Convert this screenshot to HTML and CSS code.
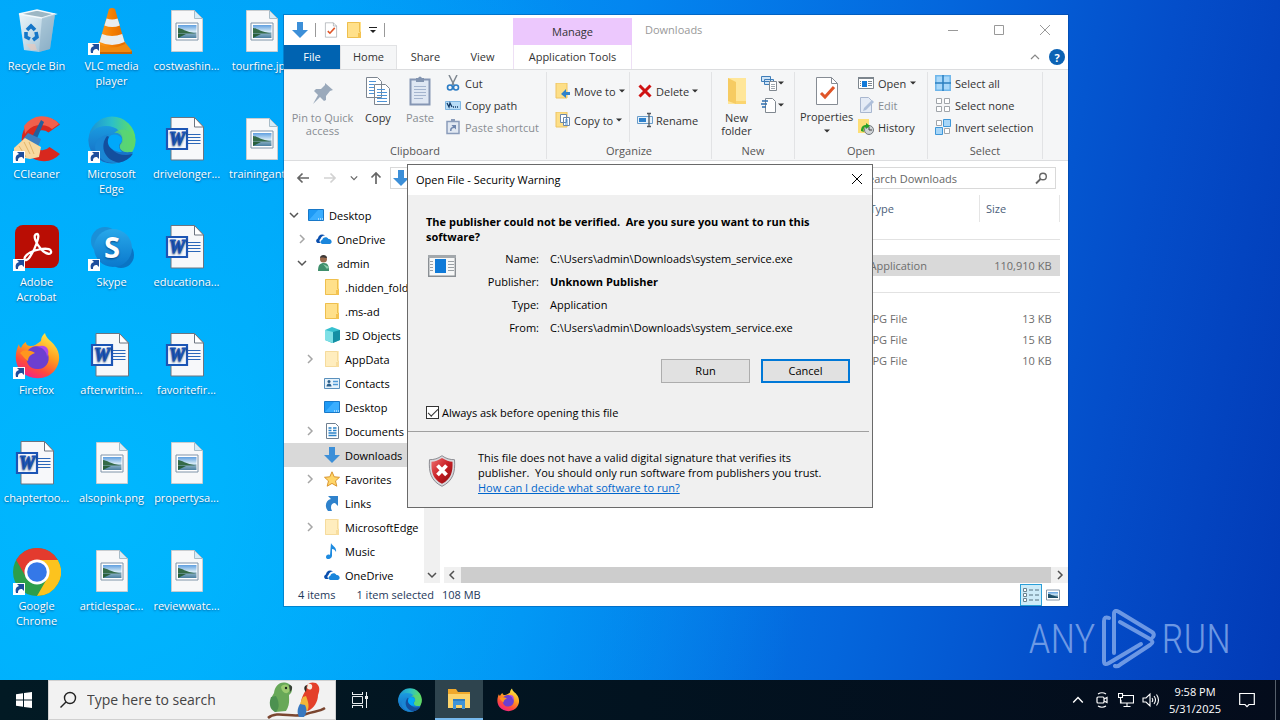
FILE: index.html
```html
<!DOCTYPE html>
<html lang="en">
<head>
<meta charset="utf-8">
<meta name="viewport" content="width=device-width, initial-scale=1">
<title>Downloads</title>
<link rel="stylesheet" href="styles.css">
</head>
<body>
<svg class="sprite" aria-hidden="true">
  <defs>
    <linearGradient id="g-edge1" x1="0" y1="0" x2="1" y2="0"><stop offset="0" stop-color="#1b8fd6"/><stop offset=".5" stop-color="#2cc0c8"/><stop offset="1" stop-color="#62e05c"/></linearGradient>
    <linearGradient id="g-edge2" x1="0" y1="0" x2="0" y2="1"><stop offset="0" stop-color="#1a9be0"/><stop offset="1" stop-color="#1667c0"/></linearGradient>
    <linearGradient id="g-skype" x1="0" y1="0" x2="0" y2="1"><stop offset="0" stop-color="#28a8ea"/><stop offset="1" stop-color="#0a78cc"/></linearGradient>
    <linearGradient id="g-fox" x1=".8" y1="0" x2=".3" y2="1"><stop offset="0" stop-color="#fff04a"/><stop offset=".45" stop-color="#ff9a1f"/><stop offset=".75" stop-color="#ff4a3c"/><stop offset="1" stop-color="#f0208c"/></linearGradient>
    <linearGradient id="g-cone" x1="0" y1="0" x2="1" y2="0"><stop offset="0" stop-color="#ff9a1e"/><stop offset=".5" stop-color="#f57f00"/><stop offset="1" stop-color="#e06a00"/></linearGradient>
    <linearGradient id="g-bin" x1="0" y1="0" x2="1" y2="1"><stop offset="0" stop-color="#eef6fa"/><stop offset=".5" stop-color="#c4dbe8"/><stop offset="1" stop-color="#8fb4cc"/></linearGradient>
    <linearGradient id="g-photo" x1="0" y1="0" x2="0" y2="1"><stop offset="0" stop-color="#5f9fe0"/><stop offset=".5" stop-color="#d3e8f4"/><stop offset=".6" stop-color="#8fb4c8"/><stop offset="1" stop-color="#4c80a0"/></linearGradient>
    <linearGradient id="g-shield" x1="0" y1="0" x2="1" y2="1"><stop offset="0" stop-color="#f07070"/><stop offset=".5" stop-color="#c81e24"/><stop offset="1" stop-color="#8c0c10"/></linearGradient>

    <symbol id="shortcut" viewBox="0 0 48 48"><path d="M0 35h12v12H0z" fill="#fff"/><path d="M3 45c-1-4 0-6 3-7l-2-2h7v7l-2-2c-3 0-4 1-4 4z" fill="#1f4e9c"/></symbol>

    <symbol id="bin" viewBox="0 0 48 48"><path d="M6 6l18-4 18 4-5 35-11 3-15-2z" fill="url(#g-bin)"/><path d="M6 6l18-4 18 4-13 4z" fill="#9db7c4" stroke="#f3f9fc" stroke-width="1.4"/><path d="M29 10l13-4-5 35-11 3z" fill="#7ea5bd" opacity=".45"/><g fill="none" stroke="#1576c8" stroke-width="3.6"><path d="M14 22l4-4 4 4M23 24l1 5-4 3M17 31l-4-2 0-5"/></g><path d="M13 36l5 6 6 0-2-6z" fill="#f0c8b8" opacity=".6"/></symbol>

    <symbol id="vlc" viewBox="0 0 48 48"><path d="M12 33h24l8 10c0 2-1 3-2 3H6c-2 0-3-1-2-3z" fill="#f08a10"/><path d="M8 44h34l2-1v3H5z" fill="#c86400"/><path d="M21 1q3-2 6 0l10 35q-13 7-26 0z" fill="url(#g-cone)"/><path d="M18.600 10.500q5.500 2 11 0l2.200 7q-7.500 3-15.400 0zM14 26q10 4 20.200 0l2.400 8q-12.500 6-25 0z" fill="#e9edef"/></symbol>

    <symbol id="photo" viewBox="0 0 48 48"><path d="M8.500 2.500h23l8 8v33h-31z" fill="#f7f8f9" stroke="#c9cdd0"/><path d="M31.500 2.500v8h8z" fill="#d5ecf8" stroke="#a8bcc8"/><path d="M13 15h22v17H13z" fill="#fff" stroke="#7e93a8"/><path d="M15 17h18.500v13H15z" fill="url(#g-photo)"/><path d="M15 20c4 0 7 4 18.500 5.500H15z" fill="#356b48"/><path d="M15 26h8l-8 4z" fill="#28603c"/></symbol>

    <symbol id="word" viewBox="0 0 48 48"><path d="M8 1.500h23.500l9 9.500V44H8z" fill="#f7f8fa" stroke="#6c7480"/><path d="M31.500 1.500V11h9z" fill="#fff" stroke="#6c7480"/><path d="M25 18.500h12.500M25 21.500h12.500M25 24.500h12.500M25 27.500h12.500" stroke="#2b67b8" stroke-width="1.200"/><path d="M4 13h20v20H4z" fill="#f4f8fd" stroke="#1c55b5" stroke-width="2.200"/><text x="14" y="29" text-anchor="middle" font-family="Liberation Serif, serif" font-size="18" font-weight="bold" font-style="italic" fill="#1c55b5" stroke="#1c55b5" stroke-width="1">W</text></symbol>

    <symbol id="ccleaner" viewBox="0 0 48 48"><path d="M47 8.500A22 22 0 1 0 47 38l-10.500-7a10 10 0 1 1-1-14.500z" fill="#d8281e"/><path d="M11 10A22 22 0 0 1 46 8l-7 5A18 18 0 0 0 12 18z" fill="#f2604c"/><path d="M28 4l3 2-9 21-5-2z" fill="#245f9c"/><path d="M15 17l13 6-3 8-15-8z" fill="#3d7fc0"/><path d="M1 32l11-10 16 9-2 10-9 2-16-3z" fill="#f8d9a0"/><path d="M11 26l6 12M16 26l5 12M6 30l7 11" stroke="#e2b468" fill="none"/></symbol>

    <symbol id="edge" viewBox="0 0 48 48"><circle cx="24" cy="24" r="23.500" fill="url(#g-edge1)"/><path d="M.5 24C1 15 9 10 18 10c11 0 17 7 17 14 0 4-3 4-3 7 0 3 4 6 9 5l4 0C40 44 33 47.500 24 47.500A23.500 23.500 0 0 1 .5 24z" fill="url(#g-edge2)"/><path d="M17 23c-5 9 0 22 15 23-14 4-25-5-25-15 0-6 5-11 14-13-2 1-3 3-4 5z" fill="#1a86d4"/><path d="M19 20c-8 10-2 25 12 26.500 6-1 11-4 14-9-13 5-23-3-23-11 0-2 0-4 1-5z" fill="#134f9e"/><path d="M26 17c5-1 9 3 8 8-1 3-3 4-2 7 2 5 10 5 14 0a23 23 0 0 0 1.500-9C43 14 34 10 26 17z" fill="#5ed66c" opacity=".75"/><path d="M21 21c3-4 11-3 13 2 0 4-3 4-3 7 0 2 1 4 3 6-10 0-17-7-13-15z" fill="#00a8fb"/></symbol>

    <symbol id="acrobat" viewBox="0 0 48 48"><rect x="2" y="1" width="44" height="43" rx="8" fill="#b90d04"/><path d="M24 10c-5 0-1 10 4 15 5 6 11 6 10 2-1-5-22-1-26 6-2 5 3 4 6-2 4-6 10-21 6-21z" fill="none" stroke="#fff" stroke-width="2.300"/></symbol>

    <symbol id="skype" viewBox="0 0 48 48"><circle cx="17" cy="17" r="14" fill="#1a90d8"/><circle cx="33" cy="31" r="13" fill="#0a74c4"/><circle cx="25" cy="24" r="19" fill="url(#g-skype)"/><text x="24" y="34" text-anchor="middle" font-family="Open Sans, sans-serif" font-size="29" font-weight="bold" fill="#fff">S</text></symbol>

    <symbol id="firefox" viewBox="0 0 48 48"><path d="M28 9c0-4 2-6 4-8 1 6 7 8 10 13 5 6 6 16 0 24-8 11-26 11-35 0-6-8-5-18-1-26 0 2 1 3 2 4 1-3 3-5 5-6 0 3 2 4 5 4 3 0 6-2 10-5z" fill="url(#g-fox)"/><path d="M14 20c4-8 17-8 21 2 3 9-4 16-11 15-7 0-12-6-10-14z" fill="#6c3fd0"/><path d="M7 21c4-4 10-3 15 0-3 1-7 3-7 8-4-3-5-5-8-8z" fill="#ff961e"/><path d="M24 15c6 0 10 5 10 10 4-7-1-14-10-10z" fill="#b04ae8"/></symbol>

    <symbol id="chrome" viewBox="0 0 48 48"><circle cx="24" cy="24" r="24" fill="#2c9e4b"/><path d="M3.200 12a24 24 0 0 1 41.600 0H24a12 12 0 0 0-10.500 18z" fill="#e33b2e"/><path d="M24 12h20.800A24 24 0 0 1 24 48l10.400-18A12 12 0 0 0 24 12z" fill="#fcc31e"/><circle cx="24" cy="24" r="12.500" fill="#fff"/><circle cx="24" cy="24" r="9.800" fill="#3478e8"/></symbol>

    <symbol id="down" viewBox="0 0 16 16"><path d="M5 0h6v8h5l-8 8-8-8h5z" fill="#3c8fd8"/></symbol>
    <symbol id="check-doc" viewBox="0 0 24 30"><path d="M1.500 1.500h15l6 6v21h-21z" fill="#fff" stroke="#868c94"/><path d="M16.500 1.500v6h6" fill="none" stroke="#868c94"/><path d="M6 17l4 4 9-10" fill="none" stroke="#e05528" stroke-width="3"/></symbol>
    <symbol id="folder" viewBox="0 0 16 16"><path d="M1 0h14v16H1z" fill="#ffe08a"/><path d="M1.500.5h12V10h1v5.500h-13z" fill="none" stroke="#eebf4e"/><path d="M12 11h3v5h-3z" fill="#f4c24f"/></symbol>
    <symbol id="folder-big" viewBox="0 0 24 30"><path d="M3 2h18v26H3z" fill="#ffe699"/><path d="M3 2l8 4v22l-8-3z" fill="#f6cb62"/><path d="M11 25h10v3H11z" fill="#fbd570"/></symbol>
    <symbol id="pin" viewBox="0 0 24 24"><path d="M14 2l8 7-3 1-4 5 0 4-2 1-4-4-7 7 5-9-4-4 2-2 5 0 4-4z" fill="#9aa9bb"/></symbol>
    <symbol id="copy" viewBox="0 0 26 30"><g fill="#fff" stroke="#7c8590"><path d="M1.500 1.500h11l4 4v16h-15zM9.500 8.500h11l4 4v16h-15z"/></g><g stroke="#4e93d6" fill="none"><path d="M4 5.500h7M4 8.500h5M4 11.500h5M4 14.500h5M4 17.500h5M12 13.500h8M12 16.500h10M12 19.500h10M12 22.500h10M12 25.500h10"/></g></symbol>
    <symbol id="paste" viewBox="0 0 24 30"><path d="M2.500 3.500h19v25h-19z" fill="#dfe7f3" stroke="#8596b4" stroke-width="2"/><path d="M8 2h2q2-3 4 0h2v4H8z" fill="#8294b0"/><path d="M6 10.500h12M6 13.500h12M6 16.500h12M6 19.500h12M6 22.500h9" stroke="#a4b4ce"/></symbol>
    <symbol id="cut" viewBox="0 0 16 16"><path d="M4 0l5 10M12 0L7 10" stroke="#7e8790" stroke-width="1.500"/><circle cx="5" cy="12.500" r="2.500" fill="none" stroke="#2b7cc4" stroke-width="1.600"/><circle cx="11" cy="12.500" r="2.500" fill="none" stroke="#2b7cc4" stroke-width="1.600"/></symbol>
    <symbol id="path" viewBox="0 0 16 16"><path d="M.5 4.500h15v8H.5z" fill="#b8dcf6" stroke="#7fb6e2"/><path d="M2 6l2 4 1-4 2 4M8 10h1M10 10h1M12 10h1" stroke="#123a66" stroke-width="1.300" fill="none"/></symbol>
    <symbol id="paste-link" viewBox="0 0 16 16"><path d="M2 2.500h12v12H2z" fill="#e1e8f2" stroke="#8a9cba" stroke-width="1.500"/><path d="M6 0h4v3H6z" fill="#8a9cba"/><path d="M5 12c0-3 1-4 3-4L6.500 6H11v4.500L9.500 9C7 9 6.500 10 6.500 12z" fill="#6f86ad"/></symbol>
    <symbol id="moveto" viewBox="0 0 16 16"><path d="M1 0h11v15H1z" fill="#fddf88" stroke="#eec463"/><path d="M15 9h-4V6l-5 5 5 4v-3h4z" fill="#2f82cc"/></symbol>
    <symbol id="copyto" viewBox="0 0 16 16"><path d="M1 0h11v15H1z" fill="#fddf88" stroke="#eec463"/><path d="M5.500 2.500h6v8h-6zM8.500 5.500h6v8h-6z" fill="#fff" stroke="#6b87aa"/><path d="M10 8h3M10 10h3M10 12h3" stroke="#4e93d6"/></symbol>
    <symbol id="delete" viewBox="0 0 16 16"><path d="M2.500 2.500l11 11M13.500 2.500l-11 11" stroke="#cf1212" stroke-width="3"/></symbol>
    <symbol id="rename" viewBox="0 0 16 16"><path d="M.5 4.500h15v7H.5z" fill="#e8f3fc" stroke="#6a9cc8"/><path d="M2 6h7v4H2z" fill="#2f82cc"/><path d="M10 1.500h4M10 14.500h4M12 2v12" stroke="#50565c" stroke-width="1.300"/></symbol>
    <symbol id="newitem" viewBox="0 0 16 16"><path d="M.5 1.500h9v5h-9zM3.500 4.500h9v5h-9z" fill="#cfe4f7" stroke="#3f7db8"/><path d="M8.500 6.500h7v9h-7z" fill="#fff" stroke="#808890"/><path d="M10 9.500h4M10 11.500h4M10 13.500h4" stroke="#a0a8b0"/></symbol>
    <symbol id="easyaccess" viewBox="0 0 16 16"><path d="M4.500 1.500h7l3 3v11h-10z" fill="#fff" stroke="#808890"/><path d="M1 4h6M0 7h6M1 10h4" stroke="#2f6fb0" stroke-width="1.400"/></symbol>
    <symbol id="app" viewBox="0 0 16 16"><path d="M.5 2.500h15v11H.5z" fill="#fff" stroke="#7d868e"/><path d="M0 2h16v2H0z" fill="#7d868e"/><path d="M4 6h5v6H4z" fill="#1279d8"/><path d="M10 6.500h4M10 8.500h4M10 10.500h4M2 6.500h1M2 8.500h1M2 10.500h1" stroke="#7d868e"/></symbol>
    <symbol id="edit" viewBox="0 0 16 16"><path d="M2.500.5h8l3 3v12h-11z" fill="#e4ebf6" stroke="#a9b7cf"/><path d="M14 3l2 2-8 8-3 1 1-3z" fill="#aebfda"/></symbol>
    <symbol id="history" viewBox="0 0 16 16"><path d="M0 0h11v14H0z" fill="#fddf77"/><circle cx="11" cy="11" r="4.500" fill="#cfd3d6" stroke="#73797e"/><path d="M11 8v3h3" stroke="#444" fill="none"/><path d="M3 12c0-4 2-6 5-6V4l4 3-4 3V8c-2 0-3 2-2 5z" fill="#2aa02a"/></symbol>
    <symbol id="sel-all" viewBox="0 0 16 16"><path d="M.8.800h14.400v14.400H.8z" fill="#a9d8fa" stroke="#6db5ea" stroke-width="1.500"/><path d="M8 0v16M0 8h16" stroke="#2b7fc0" stroke-width="1.500"/></symbol>
    <symbol id="sel-none" viewBox="0 0 16 16"><path d="M1.500 1.500h5v5h-5zM9.500 1.500h5v5h-5zM1.500 9.500h5v5h-5zM9.500 9.500h5v5h-5z" fill="#fff" stroke="#a0a5aa"/></symbol>
    <symbol id="sel-inv" viewBox="0 0 16 16"><path d="M1.500 1.500h5v5h-5zM9.500 9.500h5v5h-5z" fill="#fff" stroke="#a0a5aa"/><path d="M8.500.5h7v7h-7zM.5 8.500h7v7h-7z" fill="#a7d6f8" stroke="#3f97d8"/></symbol>
    <symbol id="caret" viewBox="0 0 8 8"><path d="M1 2.500h6l-3 3z" fill="currentColor"/></symbol>
    <symbol id="chev-right" viewBox="0 0 10 10"><path d="M3 1l4 4-4 4" fill="none" stroke="currentColor" stroke-width="1.500"/></symbol>
    <symbol id="chev-down" viewBox="0 0 10 10"><path d="M1 3l4 4 4-4" fill="none" stroke="currentColor" stroke-width="1.500"/></symbol>
    <symbol id="chev-up" viewBox="0 0 10 10"><path d="M1 7l4-4 4 4" fill="none" stroke="currentColor" stroke-width="1.200"/></symbol>
    <symbol id="arrow-left" viewBox="0 0 16 16"><path d="M14 8H3M7.500 3.500L3 8l4.500 4.500" fill="none" stroke="currentColor" stroke-width="1.700"/></symbol>
    <symbol id="close" viewBox="0 0 12 12"><path d="M1 1l10 10M11 1L1 11" fill="none" stroke="currentColor"/></symbol>
    <symbol id="lens" viewBox="0 0 16 16"><circle cx="10" cy="6.500" r="3.300" fill="none" stroke="currentColor" stroke-width="1.400"/><path d="M7.500 9L3 13.500" stroke="currentColor" stroke-width="1.800"/></symbol>
    <symbol id="screen" viewBox="0 0 16 16"><path d="M.5 2.500h15v11H.5z" fill="#1e9af5" stroke="#1878c8"/><path d="M1 13l9-10h5v10z" fill="#3aaeff"/><path d="M10 12h1M12 12h1M14 12h1" stroke="#fff"/></symbol>
    <symbol id="cloud" viewBox="0 0 16 16"><path d="M5 12H1.500C-.5 11-.2 8 2 7.500 2 4 6 2 9 4.500c-3 0-4 2-4.500 3.500C3 9 3 11 5 12z" fill="#0a4fae"/><path d="M6.500 13C4 12.500 4 9.500 6.200 9 6.500 6 11 5 12.500 8c3-.5 4.500 4 1.500 5z" fill="#1a86dc"/></symbol>
    <symbol id="user" viewBox="0 0 16 16"><circle cx="7.500" cy="4" r="3.500" fill="#9a6a4c"/><path d="M4 3c0-4 7-4 7 0-3 0-4-1-7 0z" fill="#3e3a38"/><path d="M2 16c0-6 2-8 6-8s5 3 5 8z" fill="#3f8f6c"/><path d="M7 9l4 5 2-2z" fill="#8fd0b0"/></symbol>
    <symbol id="cube" viewBox="0 0 16 16"><path d="M1 3l7-3 8 3v10l-8 3-7-3z" fill="#36c0cf"/><path d="M1 3l8 2v11l-8-3z" fill="#7fe0e6"/><path d="M9 5l7-2v10l-7 3z" fill="#148fa4"/></symbol>
    <symbol id="contacts" viewBox="0 0 16 16"><path d="M.5 3.500h15v10H.5z" fill="#e6f2fb" stroke="#5a90bc"/><circle cx="5" cy="6.500" r="1.500" fill="#2a5f8c"/><path d="M2.500 11.500c0-4 5-4 5 0z" fill="#2a5f8c"/><path d="M9 6.500h5M9 9.500h5" stroke="#4f9ad6" stroke-width="1.500"/></symbol>
    <symbol id="document" viewBox="0 0 16 16"><path d="M2.500.5h9l3 3v12h-12z" fill="#fff" stroke="#6f7f90"/><path d="M4.500 5h3M4.500 7.500h3M4.500 10h8M4.500 12.500h8M9 5h3.500M9 7.500h3.500" stroke="#2b82c8" stroke-width="1.500"/></symbol>
    <symbol id="star" viewBox="0 0 16 16"><path d="M8 .8l2.200 5 5.300.5-4 3.600 1.300 5.300L8 12.400l-4.800 2.800 1.300-5.300-4-3.600 5.300-.5z" fill="#ffd668" stroke="#d99530"/></symbol>
    <symbol id="link" viewBox="0 0 16 16"><path d="M4 16C0 11 2 5 7 4L4 1h10v10l-3-3c-4 0-5 4-3 8z" fill="#2f82cc"/></symbol>
    <symbol id="note" viewBox="0 0 16 16"><path d="M7 0c1 3 6 4 5 9-1-2-2-3-4-3v7c-1 4-6 4-6 1 0-2 2-3 4-2z" fill="#1e8be0"/></symbol>
    <symbol id="warn-app" viewBox="0 0 28 22"><path d="M.7.700h26.600v20.600H.7z" fill="#f6f7f7" stroke="#8a8f94" stroke-width="1.400"/><path d="M0 0h28v3H0z" fill="#a3a8ac"/><path d="M7 4h11v14H7z" fill="#0f7ad8"/><path d="M2 6.500h3M2 9.500h3M2 12.500h3M2 15.500h3M20 6.500h6M20 9.500h6M20 12.500h6M20 15.500h6" stroke="#9aa0a5"/></symbol>
    <symbol id="shield" viewBox="0 0 28 32"><path d="M14 .7c4 3 8 4 12.500 4C27.500 17 25 26 14 31.300 3 26 .5 17 1.500 4.700 6 4.700 10 3.700 14 .7z" fill="#d8d8dc" stroke="#8c8c92"/><path d="M14 3c4 2.500 7 3.500 10.500 3.700.5 10.500-1.500 17.300-10.500 22C5 24 3 17.200 3.500 6.700 7 6.500 10 5.500 14 3z" fill="url(#g-shield)"/><path d="M9.500 10.500l9 9.500M18.500 10.500l-9 9.500" stroke="#fff" stroke-width="3.800"/></symbol>
    <symbol id="details" viewBox="0 0 16 16"><path d="M.5 1.500h3v3h-3zM.5 6.500h3v3h-3zM.5 11.500h3v3h-3z" fill="#fff" stroke="#69828f"/><path d="M6 3h4M12 3h4M6 8h4M12 8h4M6 13h4M12 13h4" stroke="#55707e"/></symbol>
    <symbol id="thumbs" viewBox="0 0 16 16"><path d="M1.500 3h13v10h-13z" fill="#fff" stroke="#8a98a8"/><path d="M3 5h10v6H3z" fill="url(#g-photo)"/><path d="M3 7c3 0 5 2 10 3v1H3z" fill="#1f4e68"/></symbol>
    <symbol id="parrots" viewBox="0 0 62 38"><path d="M1 37c9-8 26 1 38-4 8-3 13-2 19-6" fill="none" stroke="#7a4630" stroke-width="2.500"/><path d="M22 3c-8-4-14 1-15 9-5 7-4 15 1 19l11-1c4-6 3-11 3-16 4-3 4-9 0-11z" fill="#68a858"/><path d="M4 16c-3 8 0 14 5 15 4-4 3-11 0-16z" fill="#4c9150"/><path d="M14 6c3-4 8-3 9 3-2 5-8 4-9-3z" fill="#9acb70"/><path d="M22 4c4 0 4 4 1 7z" fill="#384038"/><circle cx="19" cy="7" r="1.200" fill="#1c2a1c"/><path d="M49 2c-6-2-10 1-10 7-4 6-6 12-5 18l7 3c6-3 10-9 10-16 2-5 2-9-2-12z" fill="#e4402a"/><path d="M36 16c-3 5-4 10-3 14l7 0c3-4 1-10-1-15z" fill="#f2b63a"/><path d="M33 23c-3 5-3 9-1 13h5c3-4 3-8 1-12z" fill="#3878c0"/><path d="M41 3c3-1 5 1 4 4-1 2-3 2-5 0z" fill="#f6ece0"/><path d="M40 4c-4 1-3 5-1 7z" fill="#2c2622"/></symbol>
    <symbol id="explorer" viewBox="0 0 24 22"><path d="M1 1h8l2 3h12v5H1z" fill="#f0a92c"/><path d="M1 6h22v14H1z" fill="#fcd46c"/><path d="M6 13h12v8h-3v-4H9v4H6z" fill="#3f94d8"/><path d="M6 11h12v2H6z" fill="#2d7cc0"/></symbol>
    <symbol id="win" viewBox="0 0 16 16"><path d="M0 2.200L7 1.200V7.600H0zM8 1L16 0V7.600H8zM0 8.500H7v6.300L0 13.800zM8 8.500h8V16l-8-1.100z" fill="#fff"/></symbol>
    <symbol id="taskview" viewBox="0 0 18 16"><g fill="none" stroke="#e8ecee"><path d="M1 2.500h11M1 13.500h11M1.500 4.500h10v7h-10zM1.500 0v2.500M11.500 0v2.500M1.500 13.500v2.500M11.500 13.500v2.500M15.500 0v16"/></g><path d="M14 4h3v3h-3z" fill="#e8ecee"/></symbol>
    <symbol id="camera" viewBox="0 0 16 16"><g fill="none" stroke="#fff" stroke-width="1.200"><rect x="3" y="5" width="7" height="6" rx="1"/><path d="M10 7l3-1.500v5L10 9M4 2q4-2.500 8 0M4 14q4 2.500 8 0"/></g></symbol>
    <symbol id="network" viewBox="0 0 16 16"><g fill="none" stroke="#fff" stroke-width="1.100"><path d="M5 3.500h10.500v7.500H3V8M9 11v3M5.500 14.500h7M.5 1.500h4v4h-4zM2.500 5.500v6"/></g></symbol>
    <symbol id="volume" viewBox="0 0 18 16"><g fill="none" stroke="#fff" stroke-width="1.100"><path d="M1 6h3l4-4v12l-4-4H1zM10 6q1.500 2 0 4M12 4q3 4 0 8M14.500 2.500q4 5.500 0 11"/></g></symbol>
    <symbol id="notice" viewBox="0 0 16 16"><path d="M.7 1.500h14.600v11H10L8 14.700 6 12.500H.7z" fill="none" stroke="#fff" stroke-width="1.200"/></symbol>
    <symbol id="play" viewBox="0 0 54 62"><g fill="none" stroke="#7fa6ea" stroke-width="4" stroke-linejoin="round" stroke-linecap="round"><path d="M7 9q-5-2-5 3v40q0 5 5 2l32-19"/><path d="M18 13l30 17q5 3 0 6L19 55q-3 3-6 2M12 44V5q0-5 5-2l33 20q3 2 1 5"/></g></symbol>
  </defs>
</svg>

<div class="shell">
  <main class="desktop">
    <ul class="shortcuts">
      <li><svg class="big"><use href="#bin"/></svg><span>Recycle Bin</span></li>
      <li><svg class="big"><use href="#ccleaner"/><use href="#shortcut"/></svg><span>CCleaner</span></li>
      <li><svg class="big"><use href="#acrobat"/><use href="#shortcut"/></svg><span>Adobe<br>Acrobat</span></li>
      <li><svg class="big"><use href="#firefox"/><use href="#shortcut"/></svg><span>Firefox</span></li>
      <li><svg class="big"><use href="#word"/></svg><span>chaptertoo...</span></li>
      <li><svg class="big"><use href="#chrome"/><use href="#shortcut"/></svg><span>Google<br>Chrome</span></li>
      <li><svg class="big"><use href="#vlc"/><use href="#shortcut"/></svg><span>VLC media<br>player</span></li>
      <li><svg class="big"><use href="#edge"/><use href="#shortcut"/></svg><span>Microsoft<br>Edge</span></li>
      <li><svg class="big"><use href="#skype"/><use href="#shortcut"/></svg><span>Skype</span></li>
      <li><svg class="big"><use href="#word"/></svg><span>afterwritin...</span></li>
      <li><svg class="big"><use href="#photo"/></svg><span>alsopink.png</span></li>
      <li><svg class="big"><use href="#photo"/></svg><span>articlespac...</span></li>
      <li><svg class="big"><use href="#photo"/></svg><span>costwashin...</span></li>
      <li><svg class="big"><use href="#word"/></svg><span>drivelonger...</span></li>
      <li><svg class="big"><use href="#word"/></svg><span>educationa...</span></li>
      <li><svg class="big"><use href="#word"/></svg><span>favoritefir...</span></li>
      <li><svg class="big"><use href="#photo"/></svg><span>propertysa...</span></li>
      <li><svg class="big"><use href="#photo"/></svg><span>reviewwatc...</span></li>
      <li><svg class="big"><use href="#photo"/></svg><span>tourfine.jpg</span></li>
      <li><svg class="big"><use href="#photo"/></svg><span>trainingant...</span></li>
    </ul>

    <div class="watermark"><span>ANY</span><svg><use href="#play"/></svg><span>RUN</span></div>

    <section class="window" aria-label="Downloads">
      <header class="titlebar">
        <div class="quick">
          <svg class="ico"><use href="#down"/></svg><i class="bar"></i>
          <svg class="ico"><use href="#check-doc"/></svg>
          <svg class="ico"><use href="#folder"/></svg>
          <svg class="menu-caret" viewBox="0 0 8 8"><path d="M0 1.500h8" stroke="#222"/><path d="M1 4h6L4 7z" fill="#222"/></svg><i class="bar"></i>
        </div>
        <div class="manage">Manage</div>
        <h1>Downloads</h1>
        <div class="controls">
          <button aria-label="Minimize"><svg viewBox="0 0 12 12"><path d="M1 6.500h10" stroke="currentColor"/></svg></button>
          <button aria-label="Maximize"><svg viewBox="0 0 12 12"><path d="M1.500 1.500h9v9h-9z" fill="none" stroke="currentColor"/></svg></button>
          <button aria-label="Close"><svg><use href="#close"/></svg></button>
        </div>
      </header>
      <nav class="tabs">
        <button class="tab file">File</button>
        <button class="tab home">Home</button>
        <button class="tab">Share</button>
        <button class="tab">View</button>
        <button class="tab tools">Application Tools</button>
        <span class="tab-end"><svg class="collapse"><use href="#chev-up"/></svg><button class="help" aria-label="Help">?</button></span>
      </nav>

      <div class="ribbon">
        <section class="group clipboard">
          <div class="commands">
            <button class="large off pin"><svg class="ico24"><use href="#pin"/></svg>Pin to Quick<br>access</button>
            <button class="large"><svg class="ico30"><use href="#copy"/></svg>Copy</button>
            <button class="large off"><svg class="ico30"><use href="#paste"/></svg>Paste</button>
            <div class="stack">
              <button><svg class="ico"><use href="#cut"/></svg>Cut</button>
              <button><svg class="ico"><use href="#path"/></svg>Copy path</button>
              <button class="off"><svg class="ico"><use href="#paste-link"/></svg>Paste shortcut</button>
            </div>
          </div>
          <h2>Clipboard</h2>
        </section>
        <section class="group organize">
          <div class="commands">
            <div class="stack roomy">
              <button><svg class="ico"><use href="#moveto"/></svg>Move to<svg class="caret"><use href="#caret"/></svg></button>
              <button><svg class="ico"><use href="#copyto"/></svg>Copy to<svg class="caret"><use href="#caret"/></svg></button>
            </div>
            <div class="stack roomy ruled">
              <button><svg class="ico"><use href="#delete"/></svg>Delete<svg class="caret"><use href="#caret"/></svg></button>
              <button><svg class="ico"><use href="#rename"/></svg>Rename</button>
            </div>
          </div>
          <h2>Organize</h2>
        </section>
        <section class="group new">
          <div class="commands">
            <button class="large"><svg class="ico30"><use href="#folder-big"/></svg>New<br>folder</button>
            <div class="stack tight">
              <button aria-label="New item"><svg class="ico"><use href="#newitem"/></svg><svg class="caret"><use href="#caret"/></svg></button>
              <button aria-label="Easy access"><svg class="ico"><use href="#easyaccess"/></svg><svg class="caret"><use href="#caret"/></svg></button>
            </div>
          </div>
          <h2>New</h2>
        </section>
        <section class="group open">
          <div class="commands">
            <button class="large props"><svg class="ico30"><use href="#check-doc"/></svg>Properties<svg class="caret"><use href="#caret"/></svg></button>
            <div class="stack">
              <button><svg class="ico"><use href="#app"/></svg>Open<svg class="caret"><use href="#caret"/></svg></button>
              <button class="off"><svg class="ico"><use href="#edit"/></svg>Edit</button>
              <button><svg class="ico"><use href="#history"/></svg>History</button>
            </div>
          </div>
          <h2>Open</h2>
        </section>
        <section class="group select">
          <div class="commands">
            <div class="stack">
              <button><svg class="ico"><use href="#sel-all"/></svg>Select all</button>
              <button><svg class="ico"><use href="#sel-none"/></svg>Select none</button>
              <button><svg class="ico"><use href="#sel-inv"/></svg>Invert selection</button>
            </div>
          </div>
          <h2>Select</h2>
        </section>
      </div>

      <div class="location">
        <button aria-label="Back"><svg class="ico"><use href="#arrow-left"/></svg></button>
        <button class="dim" aria-label="Forward"><svg class="ico flip"><use href="#arrow-left"/></svg></button>
        <button class="narrow" aria-label="Recent"><svg class="caret"><use href="#chev-down"/></svg></button>
        <button class="parent" aria-label="Up"><svg class="ico turn"><use href="#arrow-left"/></svg></button>
        <div class="address"><svg class="ico"><use href="#down"/></svg></div>
        <label class="search"><input type="search" placeholder="Search Downloads" aria-label="Search Downloads"><svg class="ico"><use href="#lens"/></svg></label>
      </div>

      <div class="panes">
        <ul class="tree">
          <li class="l1"><svg class="twist on"><use href="#chev-down"/></svg><svg class="ico"><use href="#screen"/></svg>Desktop</li>
          <li class="l2"><svg class="twist"><use href="#chev-right"/></svg><svg class="ico"><use href="#cloud"/></svg>OneDrive</li>
          <li class="l2"><svg class="twist on"><use href="#chev-down"/></svg><svg class="ico"><use href="#user"/></svg>admin</li>
          <li class="l3"><i class="twist"></i><svg class="ico"><use href="#folder"/></svg>.hidden_folder</li>
          <li class="l3"><i class="twist"></i><svg class="ico"><use href="#folder"/></svg>.ms-ad</li>
          <li class="l3"><i class="twist"></i><svg class="ico"><use href="#cube"/></svg>3D Objects</li>
          <li class="l3"><svg class="twist"><use href="#chev-right"/></svg><svg class="ico faint"><use href="#folder"/></svg>AppData</li>
          <li class="l3"><i class="twist"></i><svg class="ico"><use href="#contacts"/></svg>Contacts</li>
          <li class="l3"><i class="twist"></i><svg class="ico"><use href="#screen"/></svg>Desktop</li>
          <li class="l3"><svg class="twist"><use href="#chev-right"/></svg><svg class="ico"><use href="#document"/></svg>Documents</li>
          <li class="l3 current"><i class="twist"></i><svg class="ico"><use href="#down"/></svg>Downloads</li>
          <li class="l3"><svg class="twist"><use href="#chev-right"/></svg><svg class="ico"><use href="#star"/></svg>Favorites</li>
          <li class="l3"><i class="twist"></i><svg class="ico"><use href="#link"/></svg>Links</li>
          <li class="l3"><svg class="twist"><use href="#chev-right"/></svg><svg class="ico faint"><use href="#folder"/></svg>MicrosoftEdge</li>
          <li class="l3"><i class="twist"></i><svg class="ico"><use href="#note"/></svg>Music</li>
          <li class="l3"><i class="twist"></i><svg class="ico"><use href="#cloud"/></svg>OneDrive</li>
        </ul>
        <div class="vscroll"><svg><use href="#chev-down"/></svg></div>
        <div class="files">
          <table>
            <thead><tr><th class="c-name"></th><th class="c-type">Type</th><th class="c-size">Size</th></tr></thead>
            <tbody>
              <tr class="rule"><td colspan="3"><hr></td></tr>
              <tr class="chosen"><td></td><td>Application</td><td class="num">110,910 KB</td></tr>
              <tr class="rule"><td colspan="3"><hr></td></tr>
              <tr><td></td><td>JPG File</td><td class="num">13 KB</td></tr>
              <tr><td></td><td>JPG File</td><td class="num">15 KB</td></tr>
              <tr><td></td><td>JPG File</td><td class="num">10 KB</td></tr>
            </tbody>
          </table>
          <div class="hscroll"><svg class="flip"><use href="#chev-right"/></svg><i></i><svg><use href="#chev-right"/></svg></div>
        </div>
      </div>

      <footer class="status">
        <span>4 items</span><span class="picked">1 item selected</span><span>108 MB</span>
        <button class="view active" aria-label="Details"><svg class="ico"><use href="#details"/></svg></button>
        <button class="view" aria-label="Large icons"><svg class="ico"><use href="#thumbs"/></svg></button>
      </footer>
    </section>

    <section class="dialog" role="dialog" aria-labelledby="dlg-title">
      <header><h2 id="dlg-title">Open File - Security Warning</h2><button aria-label="Close"><svg><use href="#close"/></svg></button></header>
      <div class="dialog-main">
        <p class="question">The publisher could not be verified.&nbsp; Are you sure you want to run this<br>software?</p>
        <div class="facts">
          <svg class="exe"><use href="#warn-app"/></svg>
          <dl>
            <dt>Name:</dt><dd>C:\Users\admin\Downloads\system_service.exe</dd>
            <dt>Publisher:</dt><dd><b>Unknown Publisher</b></dd>
            <dt>Type:</dt><dd>Application</dd>
            <dt>From:</dt><dd>C:\Users\admin\Downloads\system_service.exe</dd>
          </dl>
        </div>
        <div class="actions"><button>Run</button><button class="default">Cancel</button></div>
        <label class="ask"><input type="checkbox" checked>Always ask before opening this file</label>
      </div>
      <div class="advice">
        <svg><use href="#shield"/></svg>
        <p>This file does not have a valid digital signature that verifies its<br>publisher.&nbsp; You should only run software from publishers you trust.<br><a href="#help">How can I decide what software to run?</a></p>
      </div>
    </section>
  </main>

  <footer class="taskbar">
    <button class="start" aria-label="Start"><svg class="ico"><use href="#win"/></svg></button>
    <label class="find"><svg class="glass" viewBox="0 0 18 18"><circle cx="11" cy="7" r="5.500" fill="none" stroke="#222" stroke-width="1.400"/><path d="M7 11L1.500 16.500" stroke="#222" stroke-width="1.400"/></svg><input type="text" placeholder="Type here to search" aria-label="Type here to search"><svg class="birds"><use href="#parrots"/></svg></label>
    <button class="task" aria-label="Task View"><svg class="tv"><use href="#taskview"/></svg></button>
    <button class="task" aria-label="Microsoft Edge"><svg class="ico24"><use href="#edge"/></svg></button>
    <button class="task running" aria-label="File Explorer"><svg class="ico24"><use href="#explorer"/></svg></button>
    <button class="task" aria-label="Firefox"><svg class="ico24"><use href="#firefox"/></svg></button>
    <div class="tray">
      <svg class="up"><use href="#chev-up"/></svg>
      <svg class="ico"><use href="#camera"/></svg>
      <svg class="ico"><use href="#network"/></svg>
      <svg class="vol"><use href="#volume"/></svg>
      <time datetime="2025-05-31T21:58">9:58 PM<br>5/31/2025</time>
      <button class="notices" aria-label="Notifications"><svg class="ico"><use href="#notice"/></svg></button>
    </div>
  </footer>
</div>
</body>
</html>
```
FILE: styles.css
```css
* { box-sizing: border-box; }
body { margin: 0; font: 11px/15px "Open Sans", "Noto Sans", sans-serif; color: #000; }
button, input { font: inherit; color: inherit; margin: 0; }
button { background: none; border: 0; padding: 0; }
h1, h2, p, ul, dl, dd { margin: 0; padding: 0; font-size: inherit; font-weight: normal; }
ul { list-style: none; }
svg { display: block; flex: none; }
.sprite { position: absolute; width: 0; height: 0; }
.ico { width: 16px; height: 16px; }
.ico24 { width: 24px; height: 24px; }
.ico30 { width: 26px; height: 30px; }
.caret { width: 8px; height: 8px; }
.flip { transform: scaleX(-1); }
.turn { transform: rotate(90deg); }

.shell { display: grid; grid-template-rows: 1fr 40px; height: 100vh; min-height: 720px; overflow: hidden; }

/* Desktop */
.desktop {
  position: relative;
  background:
    radial-gradient(ellipse 55% 100% at 8% 75%, rgba(0, 186, 255, .9), rgba(0, 170, 255, 0)),
    linear-gradient(100deg, #00a5fa 0%, #009ff8 22%, #0386f0 45%, #0466dc 68%, #044eca 84%, #023ab6 100%);
}
.shortcuts { display: grid; grid-template-rows: repeat(6, 108px); grid-auto-flow: column; grid-auto-columns: 75px; justify-content: start; margin-left: -1px; padding-top: 8px; color: #fff; text-align: center; text-shadow: 0 1px 2px rgba(0, 30, 80, .6); }
.shortcuts li { display: flex; flex-direction: column; align-items: center; gap: 2px; white-space: nowrap; }
.big { width: 48px; height: 48px; }
.watermark { position: absolute; right: 49px; bottom: 8px; display: flex; align-items: center; gap: 6px; font: 300 40px/64px "Roboto Condensed", "Open Sans Condensed", sans-serif; color: #7fa6ea; opacity: .85; }
.watermark svg { width: 54px; height: 62px; }

/* Explorer window */
.window { position: absolute; left: 284px; top: 15px; width: 784px; height: 591px; display: flex; flex-direction: column; background: #fff; overflow: hidden; box-shadow: 0 0 0 1px rgba(0, 60, 130, .35); }
.titlebar { display: flex; height: 30px; color: #999; }
.quick { width: 229px; display: flex; align-items: center; gap: 7px; padding-left: 8px; }
.quick .bar { width: 1px; height: 14px; background: #999; }
.menu-caret { width: 8px; height: 8px; }
.manage { width: 119px; margin-top: 3px; background: #ecc8fd; color: #333; text-align: center; line-height: 28px; }
.titlebar h1 { padding-left: 13px; line-height: 30px; flex: 1; }
.controls { display: flex; }
.controls button { width: 46px; display: grid; place-items: center; color: #999; }
.controls svg, .dialog header svg { width: 12px; height: 12px; }
.tabs { display: flex; height: 24px; color: #333; }
.tab { width: 57px; padding-bottom: 1px; }
.file { width: 56px; background: #0063b1; color: #fff; }
.home { padding-bottom: 2px; background: #f5f6f7; border: 1px solid #e1e2e4; border-bottom: 0; }
.tools { width: 119px; margin-left: 2px; border: solid #eee0f5; border-width: 0 1px; }
.tab-end { flex: 1; display: flex; align-items: center; justify-content: flex-end; gap: 9px; padding-right: 3px; color: #888; }
.collapse { width: 10px; height: 10px; }
.help { width: 16px; height: 16px; border-radius: 50%; background: #0b62b4; color: #fff; font-weight: bold; }

.ribbon { display: flex; height: 92px; background: #f5f6f7; border: solid #dcdddf; border-width: 1px 0; color: #333; padding: 2px 0 1px; }
.group { display: flex; flex-direction: column; border-right: 1px solid #e2e3e5; white-space: nowrap; }
.group h2 { text-align: center; line-height: 17px; color: #555; }
.commands { flex: 1; display: flex; }
.clipboard { width: 263px; }
.clipboard .stack { padding-left: 4px; }
.organize { width: 165px; }
.new { width: 83px; }
.open { width: 133px; }
.select { width: 115px; }
.large { display: flex; flex-direction: column; align-items: center; width: 42px; padding-top: 4px; gap: 5px; line-height: 13px; }
.pin { width: 73px; gap: 6px; padding: 9px 0 0 4px; }
.props { width: 63px; gap: 4px; }
.off { color: #888d93; }
.new .large { width: 49px; }
.stack { display: flex; flex-direction: column; }
.stack button { display: flex; align-items: center; gap: 4px; height: 22px; }
.stack button .caret { margin-left: -1px; }
.roomy { padding: 8px 0 0 8px; gap: 7px; width: 85px; }
.roomy button { gap: 3px; }
.ruled { border-left: 1px solid #e2e3e5; padding-left: 7px; }
.tight button { gap: 1px; }
.select .stack { padding-left: 7px; }

.location { display: flex; align-items: center; height: 34px; padding: 0 12px 0 8px; color: #666; }
.location button { width: 32px; display: grid; place-items: center; }
.location .narrow { width: 16px; }
.location .parent { width: 28px; }
.location .dim { color: #d2d2d2; }
.location button:first-child { width: 22px; }
.address { flex: 1; height: 22px; margin-right: 8px; padding: 2px; border: 1px solid #d9d9d9; }
.search { display: flex; align-items: center; width: 201px; height: 22px; padding: 0 6px; border: 1px solid #d9d9d9; }
.search input { flex: 1; min-width: 0; border: 0; padding: 0; outline: 0; background: none; }
input::placeholder { color: #666; opacity: 1; }

.panes { flex: 1; min-height: 0; display: flex; }
.tree { width: 140px; padding-top: 8px; overflow: hidden; white-space: nowrap; }
.tree li { display: flex; align-items: center; height: 24px; gap: 5px; }
.tree .l1 { padding-left: 5px; }
.tree .l2 { padding-left: 13px; }
.tree .l3 { padding-left: 21px; }
.tree .current { background: #d9d9d9; }
.twist { width: 10px; height: 10px; margin-right: 4px; color: #a6a6a6; flex: none; }
.twist.on { color: #555; }
.faint { opacity: .55; }
.vscroll { width: 16px; background: #f0f0f0; display: flex; align-items: flex-end; justify-content: center; padding-bottom: 3px; color: #505050; }
.vscroll svg, .hscroll svg { width: 10px; height: 10px; }
.files { flex: 1; display: flex; flex-direction: column; justify-content: space-between; margin-left: 4px; }
table { border-collapse: collapse; table-layout: fixed; margin-right: 8px; color: #6d6d6d; }
th { height: 27px; padding: 0 0 0 6px; text-align: left; font-weight: normal; color: #4c607a; border-right: 1px solid #e5e5e5; }
.c-name { border: 0; }
.c-type { width: 113px; padding-left: 3px; border-right: 1px solid #e5e5e5; }
.c-size { width: 80px; }
td { height: 21px; padding: 0 0 0 3px; }
.num { text-align: right; padding-right: 8px; }
.rule td { height: 33px; padding: 1px 0 0; }
.chosen + .rule td { height: 32px; }
hr { margin: 0; border: 0; border-top: 1px solid #e2e2e2; }
.chosen { background: #d9d9d9; }
.hscroll { display: flex; align-items: center; height: 16px; background: #f0f0f0; padding: 0 3px; gap: 4px; color: #505050; }
.hscroll i { flex: 1; height: 16px; background: #cdcdcd; }

.status { display: flex; align-items: center; height: 23px; padding: 0 4px 0 14px; color: #1e395b; white-space: nowrap; }
.picked { margin: 0 8px 0 21px; }
.view { width: 22px; height: 22px; display: grid; place-items: center; }
.active { margin-left: auto; background: #cdebf8; border: 1px solid #2a9fd8; }

/* Security dialog */
.dialog { position: absolute; left: 407px; top: 164px; width: 466px; border: 1px solid #6a6a6a; background: #f0f0f0; white-space: nowrap; }
.dialog header { display: flex; align-items: center; justify-content: space-between; height: 30px; padding: 0 9px 2px 8px; background: #fff; }
.dialog-main { padding: 19px 22px 11px 18px; }
.question { font-weight: bold; }
.facts { display: flex; margin-top: 7px; }
.exe { width: 28px; height: 22px; margin: 4px 0 0 2px; }
dl { display: grid; grid-template-columns: 83px 1fr; gap: 8px 11px; }
dt { text-align: right; }
.actions { display: flex; justify-content: flex-end; gap: 11px; margin: 24px 0 22px; }
.actions button { width: 89px; height: 24px; padding-bottom: 2px; border: 1px solid #adadad; background: #e1e1e1; }
.actions .default { border: 2px solid #0078d7; }
.ask { display: flex; align-items: center; gap: 3px; }
.ask input { appearance: none; width: 13px; height: 13px; border: 1px solid #333; background: #fff; display: grid; place-items: center; }
.ask input:checked::before { content: ""; width: 9px; height: 4px; border: solid #333; border-width: 0 0 1px 1px; transform: rotate(-45deg); margin-top: -3px; }
.advice { display: flex; align-items: center; gap: 22px; margin-right: 3px; padding: 18px 20px 12px; border-top: 1px solid #a0a0a0; }
.advice svg { width: 28px; height: 32px; margin-bottom: 4px; }
.advice a { color: #0066cc; }

/* Taskbar */
.taskbar { display: flex; background: linear-gradient(90deg, #021a24, #021320 50%, #040c1c); color: #fff; }
.start { width: 48px; display: grid; place-items: center; }
.find { display: flex; align-items: center; width: 288px; background: #f2f2f2; border: 1px solid #d0d0d0; padding-left: 10px; gap: 10px; }
.glass { width: 18px; height: 18px; }
.find input { flex: 1; min-width: 0; border: 0; padding: 0; outline: 0; background: none; font-size: 14px; line-height: 20px; }
.find input::placeholder { color: #444; }
.birds { width: 62px; height: 38px; margin-right: 6px; }
.task { width: 48px; display: grid; place-items: center; margin-right: 2px; }
.task + .task { margin-right: 1px; }
.tv { width: 18px; height: 16px; }
.running { background: #2e444e; border-bottom: 2px solid #76b9ed; }
.tray { margin: 0 4px 0 auto; padding-right: 11px; border-right: 1px solid #56606c; display: flex; align-items: center; gap: 8px; }
.up { width: 12px; height: 12px; margin-right: 2px; }
.vol { width: 18px; height: 16px; }
.tray time { width: 54px; text-align: center; line-height: 17px; }
.notices { width: 34px; height: 40px; display: grid; place-items: center; }
```
